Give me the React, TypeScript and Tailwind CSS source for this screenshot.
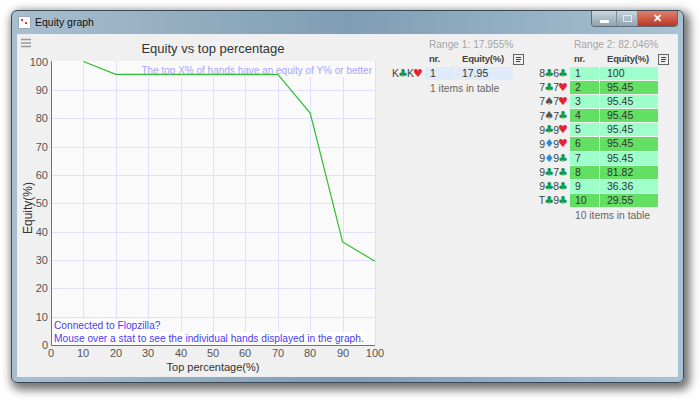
const S = '♣'
const H = '♥'
const D = '♦'
const SP = '♠'

type Card = [string, string]

function suitColor(s: string) {
  if (s === H) return 'text-[#e8222c]'
  if (s === S) return 'text-[#0f9a4a]'
  if (s === D) return 'text-[#1f8fd8]'
  return 'text-[#555]'
}

function Hand({ cards }: { cards: Card[] }) {
  return (
    <div className="flex items-center justify-end h-[13px] text-[10.5px] text-[#444] leading-none">
      {cards.map((c, i) => (
        <span key={i} className="flex items-center">
          {c[0]}
          <span className={`${suitColor(c[1])} w-[8px] flex justify-center font-['DejaVu_Sans',sans-serif] text-[11px] leading-none`}>{c[1]}</span>
        </span>
      ))}
    </div>
  )
}

function MenuIcon() {
  return (
    <div className="w-[11px] h-[11px] border border-[#666] bg-[#eee] flex flex-col gap-[1px] px-[2px] py-[2px]">
      <div className="h-px bg-[#444]" />
      <div className="h-px bg-[#444]" />
      <div className="h-px bg-[#444] w-[4px]" />
    </div>
  )
}

function Table({ range, rows, note, alt }: { range: string; rows: { cards: Card[]; eq: string }[]; note: string; alt: boolean }) {
  return (
    <div className="w-[137px] shrink-0 flex flex-col">
      <div className="h-[13px] pl-[41px] text-[10.2px] leading-[13px] text-[#a6a6a6] whitespace-nowrap">{range}</div>
      <div className="h-[16px] flex items-center font-bold text-[9.5px] tracking-[-0.2px] text-[#444]">
        <div className="w-[41px] shrink-0" />
        <div className="w-[33px] shrink-0">nr.</div>
        <div className="w-[51px] shrink-0">Equity(%)</div>
        <MenuIcon />
      </div>
      <div className="flex flex-col">
        {rows.map((r, i) => {
          const bg = !alt ? 'bg-[#dfeafb]' : i % 2 === 0 ? 'bg-[#9effcb]' : 'bg-[#63e063]'
          return (
            <div key={i} className="flex h-[14.1px] text-[10.5px] leading-[13px] text-[#333]">
              <div className="w-[37px] shrink-0 pr-[3px]"><Hand cards={r.cards} /></div>
              <div className={`${bg} w-[29px] shrink-0 pl-[5px] mb-px`}>{i + 1}</div>
              <div className={`${bg} w-[58px] ml-px shrink-0 pl-[7px] mb-px`}>{r.eq}</div>
            </div>
          )
        })}
      </div>
      <div className="pl-[42px] text-[10.3px] leading-[14px] text-[#666] whitespace-nowrap mt-px">{note}</div>
    </div>
  )
}

const px = (v: number) => Math.round(51 + v * 3.24)
const py = (v: number) => Math.round(345 - v * 2.835)

function Chart() {
  const ticks = [0, 10, 20, 30, 40, 50, 60, 70, 80, 90, 100]
  const points: [number, number][] = [[10, 100], [20, 95.45], [70, 95.45], [80, 81.82], [90, 36.36], [100, 29.55]]
  return (
    <svg width="370" height="341" viewBox="18 35 370 341" className="shrink-0 block" fontFamily="'Liberation Sans', Arial, sans-serif">
      <g stroke="#999" strokeWidth="1.5">
        <path d="M21 39.5h10M21 43h10M21 46.5h10" />
      </g>
      <text x="213" y="53" textAnchor="middle" fontSize="13" fill="#333">Equity vs top percentage</text>
      <rect x="51" y="61" width="324" height="284" fill="#fafafa" />
      <g stroke="#e2deff" strokeWidth="1" shapeRendering="crispEdges">
        {ticks.slice(1).map(t => (
          <line key={t} x1={px(t) + 0.5} x2={px(t) + 0.5} y1="61" y2="345" />
        ))}
        {ticks.slice(1, -1).map(t => (
          <line key={t} x1="51" x2="375" y1={py(t) + 0.5} y2={py(t) + 0.5} />
        ))}
      </g>
      <rect x="142" y="61" width="233" height="16" fill="#fafafa" />
      <rect x="52" y="319" width="108" height="13" fill="#fff" />
      <rect x="52" y="332" width="314" height="13" fill="#fff" />
      <polyline points={points.map(p => `${51 + p[0] * 3.24},${345 - p[1] * 2.835}`).join(' ')} fill="none" stroke="#2cc02c" strokeWidth="1.2" />
      <path d="M51.5 61V345.5H375" fill="none" stroke="#6a60d8" strokeWidth="1" />
      {ticks.map(t => (
        <text key={t} x={px(t)} y="357" textAnchor="middle" fontSize="11" fill="#555">{t}</text>
      ))}
      {ticks.map(t => (
        <text key={t} x="48" y={py(t) + 4} textAnchor="end" fontSize="11" fill="#555">{t}</text>
      ))}
      <text x="372" y="74" textAnchor="end" fontSize="10" fill="#a9a4ff">The top X% of hands have an equity of Y% or better</text>
      <text x="54" y="329" fontSize="10.2" fill="#4a3cf0">Connected to Flopzilla?</text>
      <text x="54" y="342" fontSize="10.2" fill="#4a3cf0">Mouse over a stat to see the individual hands displayed in the graph.</text>
      <text x="213" y="371" textAnchor="middle" fontSize="11" fill="#333">Top percentage(%)</text>
      <text transform="translate(32 208) rotate(-90)" textAnchor="middle" fontSize="12" fill="#333">Equity(%)</text>
    </svg>
  )
}

export default function App() {
  const range1 = [{ cards: [['K', S], ['K', H]] as Card[], eq: '17.95' }]
  const range2 = [
    { cards: [['8', S], ['6', S]] as Card[], eq: '100' },
    { cards: [['7', S], ['7', H]] as Card[], eq: '95.45' },
    { cards: [['7', SP], ['7', H]] as Card[], eq: '95.45' },
    { cards: [['7', SP], ['7', S]] as Card[], eq: '95.45' },
    { cards: [['9', S], ['9', H]] as Card[], eq: '95.45' },
    { cards: [['9', D], ['9', H]] as Card[], eq: '95.45' },
    { cards: [['9', D], ['9', S]] as Card[], eq: '95.45' },
    { cards: [['9', S], ['7', S]] as Card[], eq: '81.82' },
    { cards: [['9', S], ['8', S]] as Card[], eq: '36.36' },
    { cards: [['T', S], ['9', S]] as Card[], eq: '29.55' },
  ]

  return (
    <div className="w-[700px] h-[400px] bg-white pt-[10px] pl-[11px] overflow-hidden font-['Liberation_Sans',Arial,sans-serif]">
      <div className="w-[673px] h-[373px] rounded-[6px] border border-[#3c4a55] bg-gradient-to-r from-[#a9bfcf] via-[#7f9db3] to-[#a9c2d4] shadow-[3px_4px_10px_3px_rgba(0,0,0,0.55)] flex flex-col">
        {/* Title bar */}
        <div className="h-[23px] shrink-0 flex items-start pl-[6px] pr-[5px]">
          <div className="w-[13px] h-[13px] mt-[5px] bg-white border border-[#9ab] rounded-[1px] relative">
            <div className="absolute left-[2px] top-[2px] w-[2px] h-[2px] bg-[#e33]" />
            <div className="absolute left-[6px] top-[5px] w-[2px] h-[2px] bg-[#e33]" />
          </div>
          <div className="ml-[4px] mt-[4px] text-[10.5px] leading-[14px] text-[#111]">Equity graph</div>
          <div className="ml-auto flex h-[16px] border border-t-0 border-[#5b6b78] rounded-b-[4px] overflow-hidden">
            <div className="w-[25px] bg-gradient-to-b from-[#c9d6df] to-[#8fa3b2] flex items-end justify-center pb-[3px] border-r border-[#7d8e9b]">
              <div className="w-[9px] h-[3px] bg-white" />
            </div>
            <div className="w-[21px] bg-gradient-to-b from-[#c9d6df] to-[#8fa3b2] flex items-center justify-center border-r border-[#7d8e9b]">
              <div className="w-[9px] h-[7px] border border-[#e4ebf0]" />
            </div>
            <div className="w-[39px] bg-gradient-to-b from-[#e0816f] to-[#b8351f] flex items-center justify-center text-white font-bold text-[11px] leading-none">✕</div>
          </div>
        </div>
        {/* Content */}
        <div className="mx-[5px] h-[343px] bg-[#f0f0f0] border border-[#e8eef2] flex overflow-hidden">
          <Chart />
          <div className="flex pt-[3px]">
            <Table range="Range 1: 17.955%" rows={range1} note="1 items in table" alt={false} />
            <div className="w-[8px] shrink-0" />
            <Table range="Range 2: 82.046%" rows={range2} note="10 items in table" alt />
          </div>
        </div>
      </div>
    </div>
  )
}
